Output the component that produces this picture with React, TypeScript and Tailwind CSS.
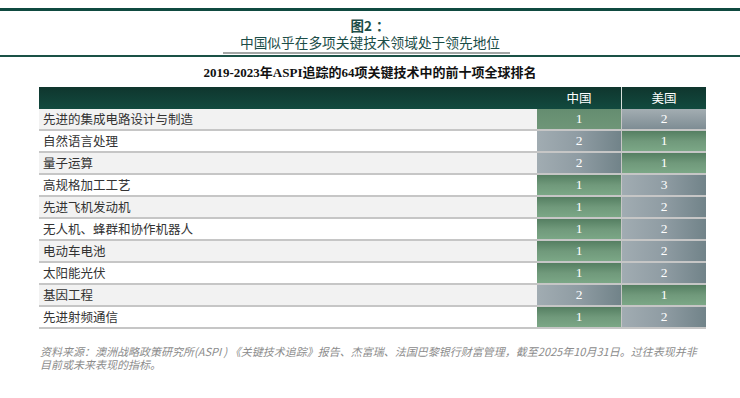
import React from "react";

const rows: [string, number, number][] = [
  ["先进的集成电路设计与制造", 1, 2],
  ["自然语言处理", 2, 1],
  ["量子运算", 2, 1],
  ["高规格加工工艺", 1, 3],
  ["先进飞机发动机", 1, 2],
  ["无人机、蜂群和协作机器人", 1, 2],
  ["电动车电池", 1, 2],
  ["太阳能光伏", 1, 2],
  ["基因工程", 2, 1],
  ["先进射频通信", 1, 2],
];

const cjk = { fontFamily: '"Noto Sans CJK SC", "Noto Sans", sans-serif' };
const serif = { fontFamily: '"Liberation Serif", "Noto Sans CJK SC", serif' };

function Cell({ v, first }: { v: number; first: boolean }) {
  const green = v === 1;
  const cls = green
    ? first
      ? "bg-gradient-to-b from-[#658d70] to-[#6f9678]"
      : "bg-gradient-to-b from-[#557f62] via-[#70997b] to-[#7ba786]"
    : first
    ? "bg-gradient-to-b from-[#a3adb2] to-[#7e8d94]"
    : "bg-gradient-to-r from-[#a1acb2] via-[#8f9ca3] to-[#718389]";
  return (
    <div
      className={`w-[84px] h-full flex items-center justify-center text-white text-[13.5px] ${cls}`}
      style={serif}
    >
      {v}
    </div>
  );
}

export default function App() {
  return (
    <div className="w-[740px] h-[398px] bg-white relative overflow-hidden" style={cjk}>
      <div className="pt-[8px]">
        <div className="h-[3px] bg-[#0f4a40]" />
      </div>
      <div className="flex flex-col items-center mt-[6px] text-[#1b4d47]">
        <div className="text-[13.5px] leading-[17px] font-bold">
          图2<span className="ml-[4px]">：</span>
        </div>
        <div className="text-[13.7px] leading-[17px]">中国似乎在多项关键技术领域处于领先地位</div>
      </div>
      <div className="flex justify-center mt-[1px]">
        <div className="w-[287px] h-[2px] bg-[#a3a6a5] ml-[-8px]" />
      </div>
      <div className="h-[2px] bg-[#1a5146] mt-[1px]" />
      <div className="flex justify-center mt-[7px]">
        <div
          className="text-[13px] leading-[18px] font-bold text-[#111]"
          style={serif}
        >
          2019-2023年ASPI追踪的64项关键技术中的前十项全球排名
        </div>
      </div>
      <div className="ml-[39px] w-[667px] mt-[5px]">
        <div className="flex h-[22px] bg-gradient-to-b from-[#0f362e] to-[#124a3f] text-white text-[12.5px]">
          <div className="flex-1" />
          <div className="w-[84px] flex items-center justify-center">中国</div>
          <div className="w-[1px] bg-[#d8e0dd]" />
          <div className="w-[84px] flex items-center justify-center">美国</div>
        </div>
        {rows.map(([name, cn, us], i) => (
          <div
            key={name}
            className={`flex h-[22px] border-b-[2px] border-[#c6c6c6] ${
              i % 2 === 0 ? "bg-[#f2f2f2]" : "bg-white"
            }`}
          >
            <div className="flex-1 flex items-center pl-[4px] text-[12.5px] text-[#333]">
              {name}
            </div>
            <Cell v={cn} first={i === 0} />
            <div className="w-[1px] bg-[#c6c6c6]" />
            <Cell v={us} first={i === 0} />
          </div>
        ))}
      </div>
      <div className="ml-[40px] mt-[16px] w-[680px] text-[11px] italic text-[#8c8c8c]">
        <div className="h-[13px] leading-[13px] whitespace-nowrap">
          资料来源：澳洲战略政策研究所(ASPI ) 《关键技术追踪》报告、杰富瑞、法国巴黎银行财富管理，截至2025年10月31日。过往表现并非
        </div>
        <div className="h-[13px] leading-[13px]">目前或未来表现的指标。</div>
      </div>
    </div>
  );
}
